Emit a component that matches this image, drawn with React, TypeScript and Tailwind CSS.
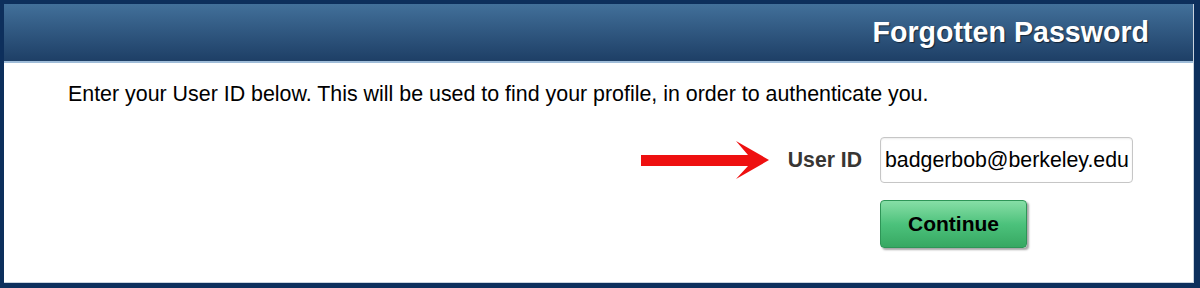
import React from "react";

function RedArrow() {
  return (
    <svg width="130" height="40" viewBox="0 0 130 40" aria-hidden className="shrink-0">
      <polygon
        points="1,15 108,15 96,1 129,20 96,39 108,26 1,26"
        fill="#ee1010"
      />
    </svg>
  );
}

export default function App() {
  const [userId, setUserId] = React.useState("badgerbob@berkeley.edu");

  return (
    <div className="h-[288px] w-[1200px] bg-[#0d2f5c] pb-[5px] pl-[4px] pr-[6px] pt-[4px] font-['Liberation_Sans',Arial,sans-serif]">
      <div className="flex h-full flex-col border-b border-r border-[#c9d3de] bg-white">
        <header className="flex h-[59px] shrink-0 items-center justify-end border-b-2 border-[#9fbcd8] bg-gradient-to-b from-[#42709a] to-[#1e3f66] pr-[44px]">
          <h1 className="text-[28.6px] font-bold leading-none text-white [text-shadow:1px_1px_1px_rgba(0,0,0,0.55)]">
            Forgotten Password
          </h1>
        </header>

        <p className="mt-[19px] pl-[64px] text-[21.4px] leading-[24px] text-black">
          Enter your User ID below. This will be used to find your profile, in order to authenticate you.
        </p>

        <div className="mt-[31px] grid grid-cols-[auto_auto_253px] items-center justify-end gap-x-[18px] gap-y-[17px] pr-[60px]">
          <RedArrow />
          <label htmlFor="userid" className="text-[21.2px] font-bold leading-none text-[#383633]">
            User ID
          </label>
          <input
            id="userid"
            value={userId}
            onChange={(e) => setUserId(e.target.value)}
            className="h-[46px] w-[253px] rounded-[4px] border border-[#c6c6c6] pl-[4px] pr-[2px] text-[21.3px] text-black shadow-[inset_0_1px_2px_rgba(0,0,0,0.08)] outline-none"
          />
          <button
            type="button"
            className="col-start-3 h-[48px] w-[147px] rounded-[4px] border border-[#2e9557] bg-gradient-to-b from-[#86dea6] via-[#4cc27c] to-[#37a862] text-[21px] font-bold text-black shadow-[2px_2px_2px_rgba(0,0,0,0.35)]"
          >
            Continue
          </button>
        </div>
      </div>
    </div>
  );
}
